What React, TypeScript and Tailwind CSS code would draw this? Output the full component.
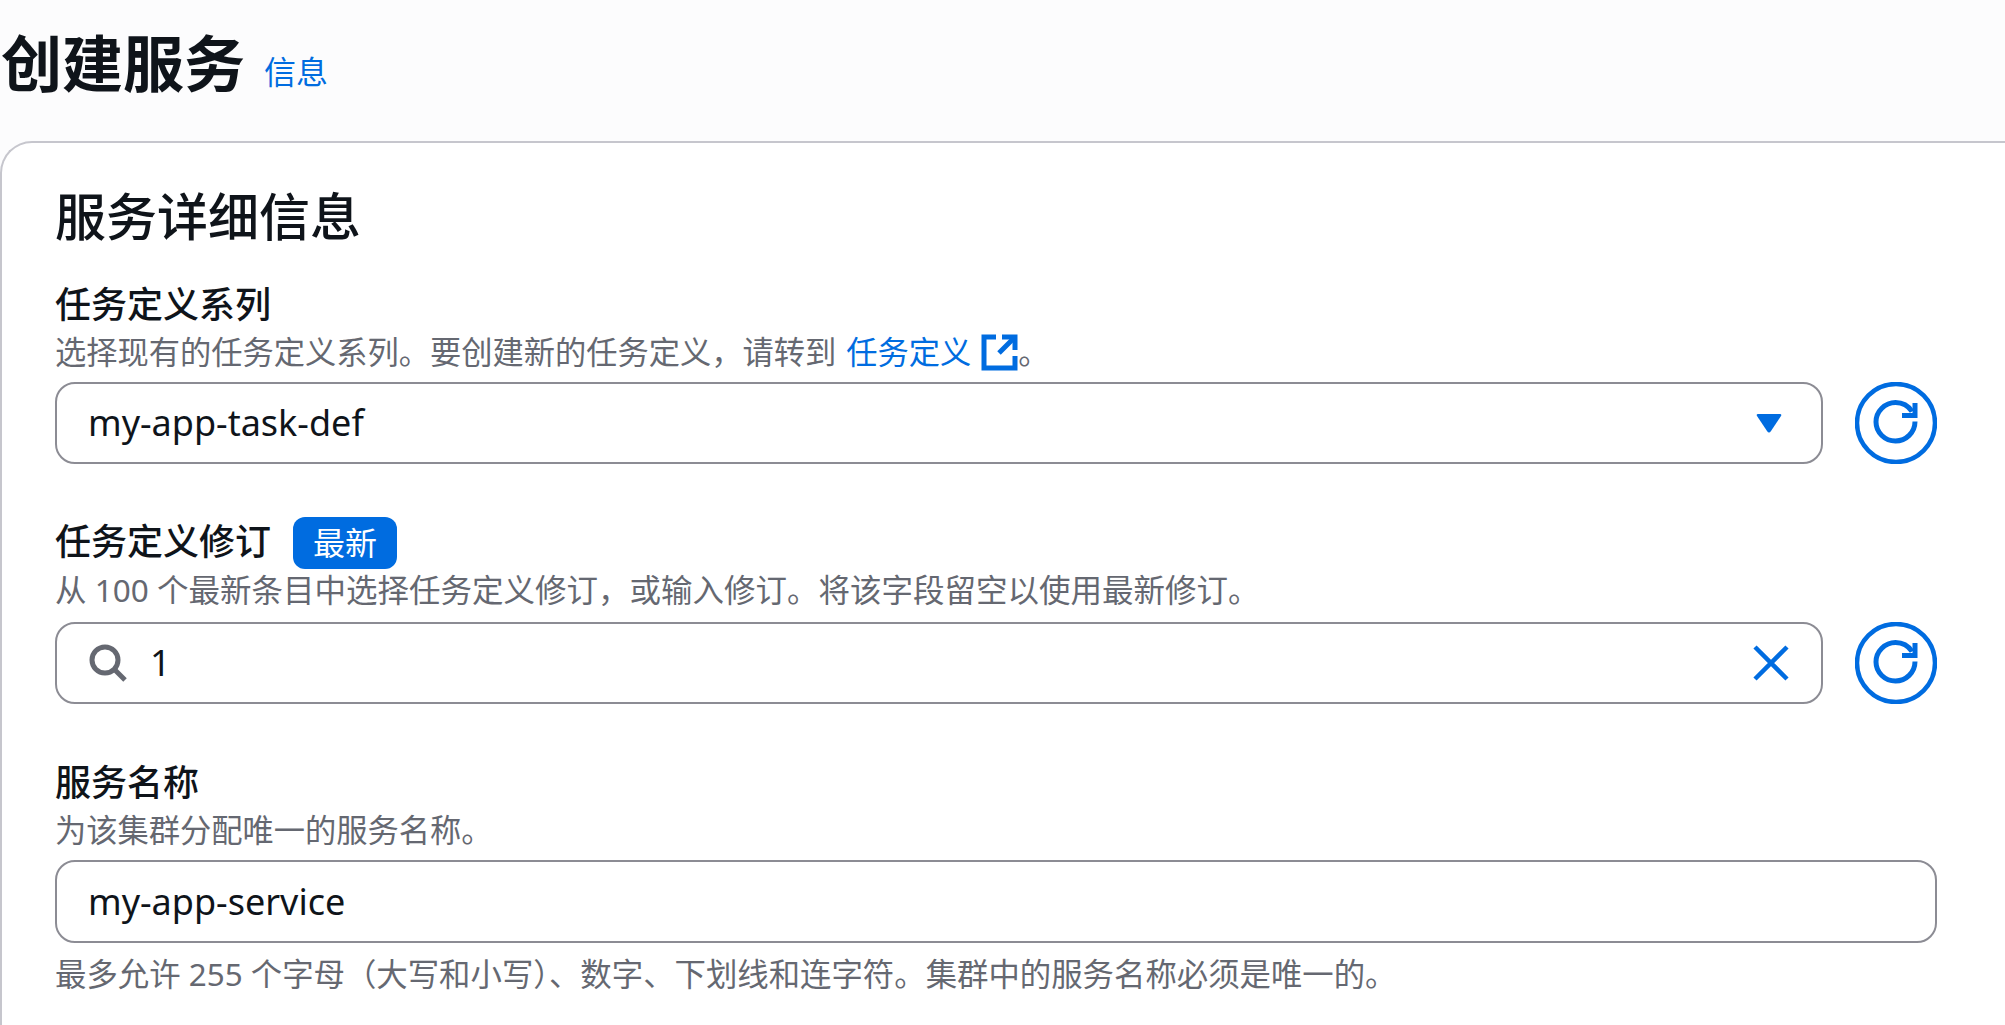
const sans = "font-['Noto_Sans','Noto_Sans_CJK_SC',sans-serif]";

function RefreshButton() {
  return (
    <button className="shrink-0 w-[82px] h-[82px] flex items-center justify-center">
      <svg width="82" height="82" viewBox="0 0 82 82" fill="none" stroke="#006ce0" strokeWidth="4.500">
        <circle cx="41" cy="41" r="39" />
        <path d="M60 39.5c0 11-9 19.5-19.5 19.5S21 50.500 21 40s9-19.500 19.500-19.500c7 0 13 3.500 16.500 9" strokeWidth="5" />
        <path d="M60 21v12.500H47" strokeWidth="5" />
      </svg>
    </button>
  );
}

function Label({ text, children }: { text: string; children?: React.ReactNode }) {
  return (
    <div className="flex items-center h-[52px] gap-[22px]">
      <span className="text-[36px] leading-[52px] font-medium text-[#0f141a] -translate-y-px">{text}</span>
      {children}
    </div>
  );
}

export default function App() {
  return (
    <div className={`${sans} w-[2005px] h-[1025px] overflow-hidden bg-[#fcfcfd]`}>
      <div className="flex items-center h-[141px] pb-[14px] pl-[1px]">
        <h1 className="text-[61px] leading-none font-semibold text-[#0f141a]">创建服务</h1>
        <a className="ml-[19px] mt-[17px] text-[32px] leading-none text-[#006ce0]">信息</a>
      </div>
      <div className="w-[2060px] h-[900px] bg-white border-t-2 border-l-2 border-[#c6c6cd] rounded-tl-[32px] pl-[53px] pt-[40px]">
        <div className="w-[1882px]">
          <h2 className="text-[51px] leading-[66px] font-medium text-[#0f141a]">服务详细信息</h2>

          <div className="mt-[31px]">
            <Label text="任务定义系列" />
            <div className="flex items-center h-[41px] text-[31.25px] leading-[41px] text-[#656871]">
              <span>选择现有的任务定义系列。要创建新的任务定义，请转到</span>
              <a className="ml-[10px] text-[#006ce0]">任务定义</a>
              <svg className="ml-[10px]" width="37" height="37" viewBox="0 0 37 37" fill="none" stroke="#006ce0">
                <path d="M15 3H3v31h31V22" strokeWidth="5" />
                <path d="M21 3h13v13" strokeWidth="5" />
                <path d="M33 4 18 19" strokeWidth="5" />
              </svg>
              <span>。</span>
            </div>
            <div className="flex items-center gap-[32px] mt-[9px]">
              <div className="flex-1 h-[82px] border-2 border-[#8c8c94] rounded-[20px] flex items-center justify-between pl-[31px] pr-[38px]">
                <span className="text-[36px] text-[#0f141a]">my-app-task-def</span>
                <svg width="28" height="22" viewBox="0 0 28 22">
                  <path d="M3 2h22q2 0 1 2L16 19q-2 3-4 0L2 4q-1-2 1-2z" fill="#006ce0" />
                </svg>
              </div>
              <RefreshButton />
            </div>
          </div>

          <div className="mt-[53px]">
            <Label text="任务定义修订">
              <span className="w-[104px] h-[52px] rounded-[12px] bg-[#006ce0] text-white text-[32px] flex items-center justify-center">最新</span>
            </Label>
            <div className="h-[41px] text-[31.5px] leading-[41px] text-[#656871]">从 100 个最新条目中选择任务定义修订，或输入修订。将该字段留空以使用最新修订。</div>
            <div className="flex items-center gap-[32px] mt-[12px]">
              <div className="flex-1 h-[82px] border-2 border-[#8c8c94] rounded-[20px] flex items-center pl-[32px] pr-[32px]">
                <svg width="38" height="38" viewBox="0 0 38 38" fill="none" stroke="#656871" strokeWidth="5">
                  <circle cx="16" cy="16" r="13" />
                  <path d="M25 25l11 11" />
                </svg>
                <span className="ml-[23px] text-[36px] text-[#0f141a]">1</span>
                <svg className="ml-auto" width="36" height="36" viewBox="0 0 36 36" fill="none" stroke="#006ce0" strokeWidth="4.500">
                  <path d="M2 2l32 32M34 2 2 34" />
                </svg>
              </div>
              <RefreshButton />
            </div>
          </div>

          <div className="mt-[54px]">
            <Label text="服务名称" />
            <div className="h-[41px] text-[31.25px] leading-[41px] text-[#656871]">为该集群分配唯一的服务名称。</div>
            <div className="h-[83px] mt-[9px] border-2 border-[#8c8c94] rounded-[20px] flex items-center pl-[31px]">
              <span className="text-[36px] text-[#0f141a]">my-app-service</span>
            </div>
            <div className="mt-[10px] h-[41px] text-[31.4px] leading-[41px] text-[#656871]">最多允许 255 个字母（大写和小写）、数字、下划线和连字符。集群中的服务名称必须是唯一的。</div>
          </div>
        </div>
      </div>
    </div>
  );
}
